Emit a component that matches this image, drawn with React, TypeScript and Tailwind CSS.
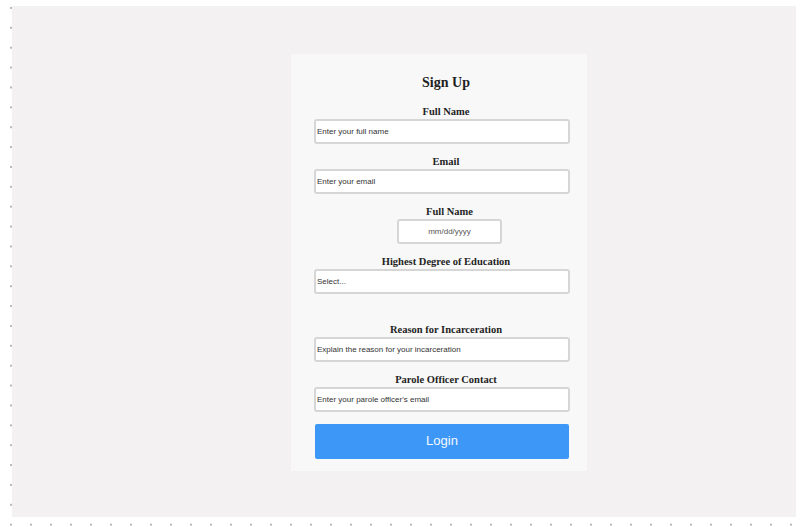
import React from "react";

const serif = "font-['Liberation_Serif',serif]";

function Label({ children }: { children: React.ReactNode }) {
  return (
    <div className={`${serif} text-[10.5px] leading-[14px] font-bold text-[#1f1f1f] text-center whitespace-nowrap`}>
      {children}
    </div>
  );
}

function TextInput({ placeholder }: { placeholder: string }) {
  return (
    <input
      type="text"
      placeholder={placeholder}
      className="w-[256px] h-[25px] bg-white border-2 border-[#d6d6d6] rounded-[3px] pl-[1px] text-[8px] font-['Liberation_Sans',sans-serif] text-[#333] placeholder:text-[#333] outline-none"
    />
  );
}

function Field({ label, placeholder }: { label: string; placeholder: string }) {
  return (
    <div className="flex flex-col">
      <Label>{label}</Label>
      <TextInput placeholder={placeholder} />
    </div>
  );
}

export default function App() {
  return (
    <div className="w-[806px] h-[527px] bg-white pt-[6px] pl-[12px] bg-[radial-gradient(circle,#b8b8b8_0.7px,transparent_1.1px)] bg-[length:20px_19.88px] bg-[position:1px_-2px] overflow-hidden">
      <div className="w-[784px] h-[511px] bg-[#f3f1f2] pt-[48px] pl-[279px]">
        <div className="w-[296px] h-[417px] bg-[#f8f8f8] pt-[17px] pl-[23px]">
          <div className="w-[264px] flex flex-col">
            <div className={`${serif} text-[14px] leading-[24px] font-bold text-[#1f1f1f] text-center mb-[9.5px]`}>
              Sign Up
            </div>
            <div className="flex flex-col gap-[11px]">
              <Field label="Full Name" placeholder="Enter your full name" />
              <Field label="Email" placeholder="Enter your email" />
              <div className="flex flex-col w-[105px] ml-[83px]">
                <Label>Full Name</Label>
                <input
                  type="text"
                  placeholder="mm/dd/yyyy"
                  className="w-[105px] h-[25px] bg-white border-2 border-[#d6d6d6] rounded-[3px] text-center text-[8px] font-['Liberation_Sans',sans-serif] placeholder:text-[#555] outline-none"
                />
              </div>
              <div className="flex flex-col mb-[18px]">
                <Label>Highest Degree of Education</Label>
                <TextInput placeholder="Select..." />
              </div>
              <Field label="Reason for Incarceration" placeholder="Explain the reason for your incarceration" />
              <Field label="Parole Officer Contact" placeholder="Enter your parole officer's email" />
            </div>
            <button className="mt-[12px] ml-[1px] w-[254px] h-[35px] bg-[#3d97f6] rounded-[2px] text-[13px] font-['Liberation_Sans',sans-serif] text-[#f4f8ff]">
              Login
            </button>
          </div>
        </div>
      </div>
    </div>
  );
}
